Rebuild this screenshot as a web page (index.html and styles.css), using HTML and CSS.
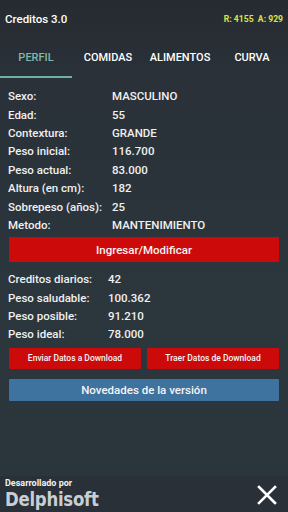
FILE: index.html
```html
<!DOCTYPE html>
<html lang="es">
<head>
  <meta charset="UTF-8">
  <meta name="viewport" content="width=device-width, initial-scale=1.0">
  <title>Creditos 3.0</title>
  <link rel="stylesheet" href="styles.css">
</head>
<body>
  <div class="app">
    <div class="topbar">
      <span class="title">Creditos 3.0</span>
      <span class="counts">R: 4155&nbsp; A: 929</span>
    </div>
    <div class="tabs">
      <div class="tab active">PERFIL</div>
      <div class="tab">COMIDAS</div>
      <div class="tab">ALIMENTOS</div>
      <div class="tab">CURVA</div>
    </div>

    <div class="content">
      <div class="rows">
        <div class="row"><span class="lbl">Sexo:</span><span>MASCULINO</span></div>
        <div class="row"><span class="lbl">Edad:</span><span>55</span></div>
        <div class="row"><span class="lbl">Contextura:</span><span>GRANDE</span></div>
        <div class="row"><span class="lbl">Peso inicial:</span><span>116.700</span></div>
        <div class="row"><span class="lbl">Peso actual:</span><span>83.000</span></div>
        <div class="row"><span class="lbl">Altura (en cm):</span><span>182</span></div>
        <div class="row"><span class="lbl">Sobrepeso (años):</span><span>25</span></div>
        <div class="row"><span class="lbl">Metodo:</span><span>MANTENIMIENTO</span></div>
      </div>

      <button class="btn red big">Ingresar/Modificar</button>

      <div class="rows second">
        <div class="row"><span class="lbl">Creditos diarios:</span><span>42</span></div>
        <div class="row"><span class="lbl">Peso saludable:</span><span>100.362</span></div>
        <div class="row"><span class="lbl">Peso posible:</span><span>91.210</span></div>
        <div class="row"><span class="lbl">Peso ideal:</span><span>78.000</span></div>
      </div>

      <div class="pair">
        <button class="btn red small">Enviar Datos a Download</button>
        <button class="btn red small">Traer Datos de Download</button>
      </div>

      <button class="btn blue">Novedades de la versión</button>
    </div>

    <div class="footer">
      <div class="brand">
        <div class="by">Desarrollado por</div>
        <div class="logo">Delphisoft</div>
      </div>
      <svg class="close" width="20" height="20" viewBox="0 0 20 20">
        <path d="M2 2 L18 18 M18 2 L2 18" stroke="#fff" stroke-width="2.6" stroke-linecap="square"/>
      </svg>
    </div>
  </div>
</body>
</html>
```

FILE: styles.css
```css
html, body {
  margin: 0;
  padding: 0;
}
body {
  font-family: Roboto, "Liberation Sans", sans-serif;
  background-color: #2b343b;
  color: #f2f2f2;
}
.app {
  width: 288px;
  height: 512px;
  display: flex;
  flex-direction: column;
  background: linear-gradient(#262b31 0px, #2a3138 80px, #2c363d 300px, #2b353c 470px);
}
.topbar {
  height: 38px;
  display: flex;
  align-items: center;
  justify-content: space-between;
  padding: 0 5px 0 5px;
}
.title {
  font-size: 11.5px;
  font-weight: 500;
  color: #fff;
}
.counts {
  font-size: 8.6px;
  font-weight: 700;
  color: #d8e34a;
}
.tabs {
  height: 40px;
  display: flex;
  align-items: center;
}
.tab {
  flex: 1;
  height: 100%;
  display: flex;
  align-items: center;
  justify-content: center;
  font-size: 11px;
  font-weight: 500;
  color: #fff;
  box-sizing: border-box;
  padding-bottom: 2px;
}
.tab.active {
  color: #7fb9ab;
  border-bottom: 2px solid #6eb0a1;
  padding-bottom: 0;
}
.content {
  padding: 9px 9px 0 8px;
}
.rows .row {
  display: flex;
  height: 18.4px;
  align-items: center;
  font-size: 11.5px;
  font-weight: 500;
  color: #f0f0f0;
}
.lbl {
  width: 104px;
}
.second .lbl {
  width: 100px;
}
.rows.second {
  margin-top: 8px;
}
.btn {
  display: block;
  border: none;
  font-family: Roboto, "Liberation Sans", sans-serif;
  font-weight: 500;
  color: #f4f4f4;
  border-radius: 1px;
  padding: 0;
}
.red {
  background-color: #cd0a0a;
}
.big {
  width: 270px;
  height: 25px;
  margin: 3px 0 0 1px;
  font-size: 11.5px;
}
.pair {
  display: flex;
  gap: 6px;
  margin: 4px 0 0 1px;
  width: 270px;
}
.small {
  flex: 1;
  height: 21px;
  font-size: 8.5px;
}
.blue {
  background-color: #3e73a0;
  width: 270px;
  height: 22px;
  margin: 10px 0 0 1px;
  font-size: 11.5px;
}
.footer {
  margin-top: auto;
  height: 36px;
  display: flex;
  align-items: flex-end;
  justify-content: space-between;
  padding: 0 11px 2px 5px;
  box-sizing: border-box;
  background-color: #293037;
}
.by {
  font-size: 9px;
  line-height: 10px;
  font-weight: 700;
  color: #f2f2f2;
}
.logo {
  font-family: "DejaVu Sans Condensed", "Liberation Sans Narrow", sans-serif;
  font-weight: 700;
  font-size: 20px;
  line-height: 22px;
  letter-spacing: -0.3px;
  color: #c9ced3;
  transform: scaleX(0.92);
  transform-origin: left;
}
.close {
  margin-bottom: 5px;
}
```
